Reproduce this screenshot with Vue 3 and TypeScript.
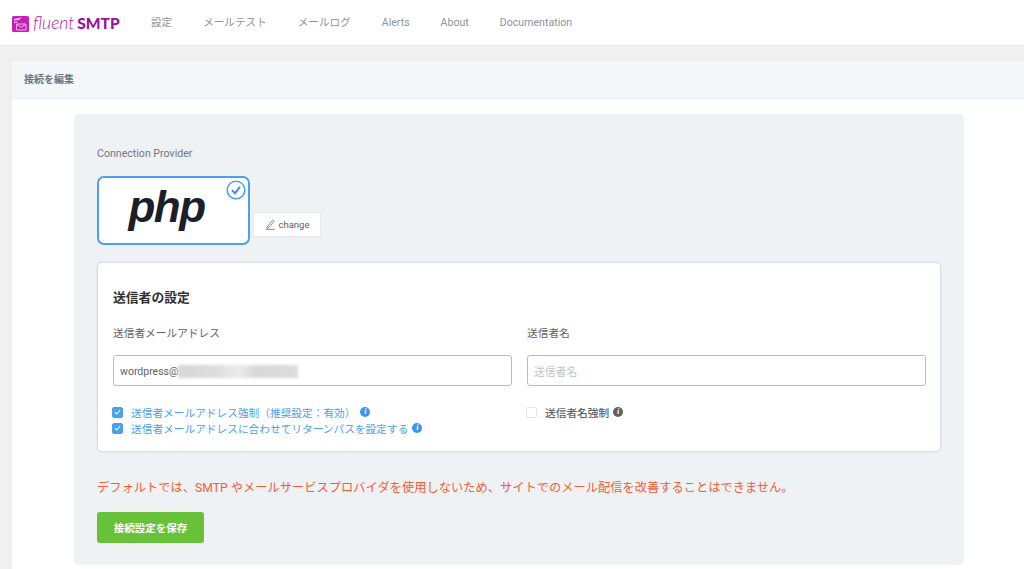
<script setup lang="ts">
const nav: string[] = ['設定', 'メールテスト', 'メールログ', 'Alerts', 'About', 'Documentation']
</script>

<template>
  <div class="page">
    <header class="top">
      <div class="logo">
        <svg class="logo-icon" viewBox="0 0 17 16" width="17" height="16">
          <rect x="0" y="0" width="17" height="16" rx="1.5" fill="#c81eb4" />
          <path d="M2 3 L10 1.2 L7 4 L2 4.6 Z" fill="#f5c6ee" />
          <path d="M2 5.8 L6 5.4 L4.5 6.8 L2 7.2 Z" fill="#f5c6ee" />
          <rect x="4.5" y="8" width="9.5" height="6" rx="0.8" fill="none" stroke="#f5c6ee" stroke-width="0.9" />
          <path d="M4.8 8.4 L9.2 11.3 L13.7 8.4" fill="none" stroke="#f5c6ee" stroke-width="0.9" />
        </svg>
        <span class="fluent">fluent</span><span class="smtp">SMTP</span>
      </div>
      <nav class="nav">
        <span v-for="item in nav" :key="item" class="nav-item">{{ item }}</span>
      </nav>
    </header>

    <main class="wrap">
      <section class="panel">
        <div class="panel-head">接続を編集</div>
        <div class="panel-body">
          <div class="card">
            <div class="provider-label">Connection Provider</div>
            <div class="provider-row">
              <div class="provider">
                <span class="php">php</span>
                <svg class="check" viewBox="0 0 20 20" width="20" height="20">
                  <circle cx="10" cy="10" r="8.8" fill="#fff" stroke="#4a9ff5" stroke-width="1.6" />
                  <path d="M6 10.3 L9 13.2 L14 6.8" fill="none" stroke="#3f8fe8" stroke-width="2" />
                </svg>
              </div>
              <button class="change" type="button">
                <svg viewBox="0 0 12 12" width="11" height="11">
                  <path d="M2.5 8.5 L7.8 2 Q8.6 1.2 9.4 1.9 Q10 2.7 9.3 3.4 L4 9.6 L2 10.2 Z M1 11.3 H10.5" fill="none" stroke="#606266" stroke-width="0.8" />
                </svg>
                change
              </button>
            </div>

            <div class="sender">
              <h3 class="sender-title">送信者の設定</h3>
              <div class="cols">
                <div class="col">
                  <label class="field-label">送信者メールアドレス</label>
                  <div class="input">
                    <span class="val">wordpress@</span><span class="blur"></span>
                  </div>
                  <div class="checks">
                    <div class="check-row">
                      <span class="box on-box"><svg viewBox="0 0 10 10" width="10" height="10"><path d="M2 5.2 L4.2 7.3 L8 2.8" fill="none" stroke="#fff" stroke-width="1.2" /></svg></span>
                      <span class="check-text">送信者メールアドレス強制（推奨設定：有効）</span>
                      <span class="info blue gap">i</span>
                    </div>
                    <div class="check-row">
                      <span class="box on-box"><svg viewBox="0 0 10 10" width="10" height="10"><path d="M2 5.2 L4.2 7.3 L8 2.8" fill="none" stroke="#fff" stroke-width="1.2" /></svg></span>
                      <span class="check-text">送信者メールアドレスに合わせてリターンパスを設定する</span>
                      <span class="info blue">i</span>
                    </div>
                  </div>
                </div>
                <div class="col">
                  <label class="field-label">送信者名</label>
                  <div class="input">
                    <span class="placeholder">送信者名</span>
                  </div>
                  <div class="checks">
                    <div class="check-row">
                      <span class="box"></span>
                      <span class="check-text dark">送信者名強制</span>
                      <span class="info grey">i</span>
                    </div>
                  </div>
                </div>
              </div>
            </div>

            <p class="warn">デフォルトでは、SMTP やメールサービスプロバイダを使用しないため、サイトでのメール配信を改善することはできません。</p>
            <button class="save" type="button">接続設定を保存</button>
          </div>
        </div>
      </section>
    </main>
  </div>
</template>

<style scoped>
.page {
  width: 1024px;
  height: 569px;
  overflow: hidden;
  background: #f0f0f0;
  font-family: Roboto, "Noto Sans CJK JP", sans-serif;
  color: #606266;
}
.top {
  height: 45px;
  background: #fff;
  display: flex;
  align-items: center;
  padding-left: 12px;
  border-bottom: 1px solid #ececec;
  box-sizing: content-box;
}
.logo { display: flex; align-items: center; width: 139px; }
.logo-icon { margin-right: 4px; margin-top: 2px; }
.fluent {
  font-family: Lato, sans-serif;
  font-style: italic;
  font-size: 17.5px;
  font-weight: 300;
  color: #b01aa7;
}
.smtp {
  font-family: Lato, sans-serif;
  font-size: 15.5px;
  font-weight: 900;
  color: #a0109a;
  margin-left: 3px;
}
.nav { display: flex; gap: 31px; align-items: flex-start; margin-top: 1px; }
.nav-item { font-size: 10.6px; line-height: 16px; height: 16px; color: #909399; }
.wrap { padding: 15px 0 0 12px; }
.panel { background: #fff; height: 508px; }
.panel-head {
  height: 38px;
  line-height: 37px;
  padding-left: 12px;
  background: #f4f7fa;
  border-bottom: 1px solid #ebeef5;
  box-sizing: border-box;
  font-size: 10px;
  font-weight: 700;
  color: #6b7480;
}
.panel-body { padding: 15px 60px 0 62px; }
.card {
  background: #eef2f5;
  border-radius: 5px;
  height: 451px;
  box-sizing: border-box;
  padding: 32px 23px 0;
}
.provider-label { font-size: 10.6px; line-height: 15px; color: #737880; }
.provider-row { display: flex; align-items: flex-end; margin-top: 15px; }
.provider {
  position: relative;
  width: 153px;
  height: 69px;
  box-sizing: border-box;
  background: #fff;
  border: 2px solid #4a9ff5;
  border-radius: 7px;
  display: flex;
  align-items: center;
  justify-content: center;
}
.php {
  font-family: "Liberation Sans", sans-serif;
  font-style: italic;
  font-weight: 700;
  font-size: 44px;
  line-height: 44px;
  letter-spacing: -1.5px;
  color: #1c1f2b;
  margin: -8px 14px 0 0;
}
.check { position: absolute; top: 2px; right: 2px; }
.change {
  margin: 0 0 8px 3px;
  width: 68px;
  height: 25px;
  padding: 0;
  background: #fff;
  border: 1px solid #e4e7ed;
  border-radius: 2px;
  font-family: inherit;
  font-size: 9.5px;
  color: #606266;
  display: flex;
  align-items: center;
  justify-content: center;
  gap: 3px;
}
.sender {
  margin-top: 17px;
  height: 190px;
  box-sizing: border-box;
  background: #fff;
  border: 1px solid #dcdfe6;
  border-radius: 5px;
  box-shadow: 0 0 2px rgba(0,0,0,0.12);
  padding: 26px 14px 0 15px;
}
.sender-title {
  margin: 0;
  font-size: 12.8px;
  line-height: 18px;
  font-weight: 700;
  color: #303133;
}
.cols { display: flex; gap: 15px; margin-top: 19px; }
.col { flex: 1; min-width: 0; }
.field-label { display: block; font-size: 10.7px; line-height: 16px; color: #606266; }
.input {
  margin-top: 13px;
  height: 31px;
  box-sizing: border-box;
  border: 1px solid #b8bbc2;
  border-radius: 3px;
  background: #fff;
  display: flex;
  align-items: center;
  padding-left: 6px;
  font-size: 10.5px;
}
.val { color: #606266; line-height: 16px; margin-top: 2px; }
.blur {
  display: block;
  width: 120px;
  height: 13px;
  margin-top: 1px;
  background: linear-gradient(90deg, #d6d6d6 0%, #dedede 35%, #ececec 50%, #d8d8d8 65%, #dcdcdc 100%);
  filter: blur(1.5px);
}
.placeholder { color: #c0c4cc; font-size: 10.8px; }
.checks { margin-top: 18px; }
.check-row { display: flex; align-items: center; height: 16px; font-size: 10.7px; margin-left: -1px; }
.box {
  width: 11px;
  height: 11px;
  box-sizing: border-box;
  border: 1px solid #e4e7ed;
  border-radius: 2px;
  background: #fff;
  margin-right: 8px;
  display: flex;
  align-items: center;
  justify-content: center;
}
.on-box { background: #4a9ff5; border-color: #4a9ff5; }
.check-text { color: #4a9ff5; }
.check-text.dark { color: #606266; font-weight: 500; }
.info {
  width: 10px;
  height: 10px;
  border-radius: 50%;
  margin-left: 4px;
  color: #fff;
  font-family: "Liberation Serif", serif;
  font-style: italic;
  font-weight: 700;
  font-size: 8px;
  line-height: 10px;
  text-align: center;
}
.info.gap { margin-left: 5px; }
.blue { background: #3f94f0; }
.grey { background: #5f6368; }
.warn {
  margin: 28px 0 0;
  font-size: 12.25px;
  line-height: 16px;
  color: #fa5b35;
  white-space: nowrap;
}
.save {
  display: block;
  margin-top: 16px;
  width: 107px;
  height: 31px;
  padding: 0;
  border: none;
  border-radius: 3px;
  background: #67c23a;
  color: #fff;
  font-family: inherit;
  font-size: 10.5px;
  font-weight: 700;
}
</style>
